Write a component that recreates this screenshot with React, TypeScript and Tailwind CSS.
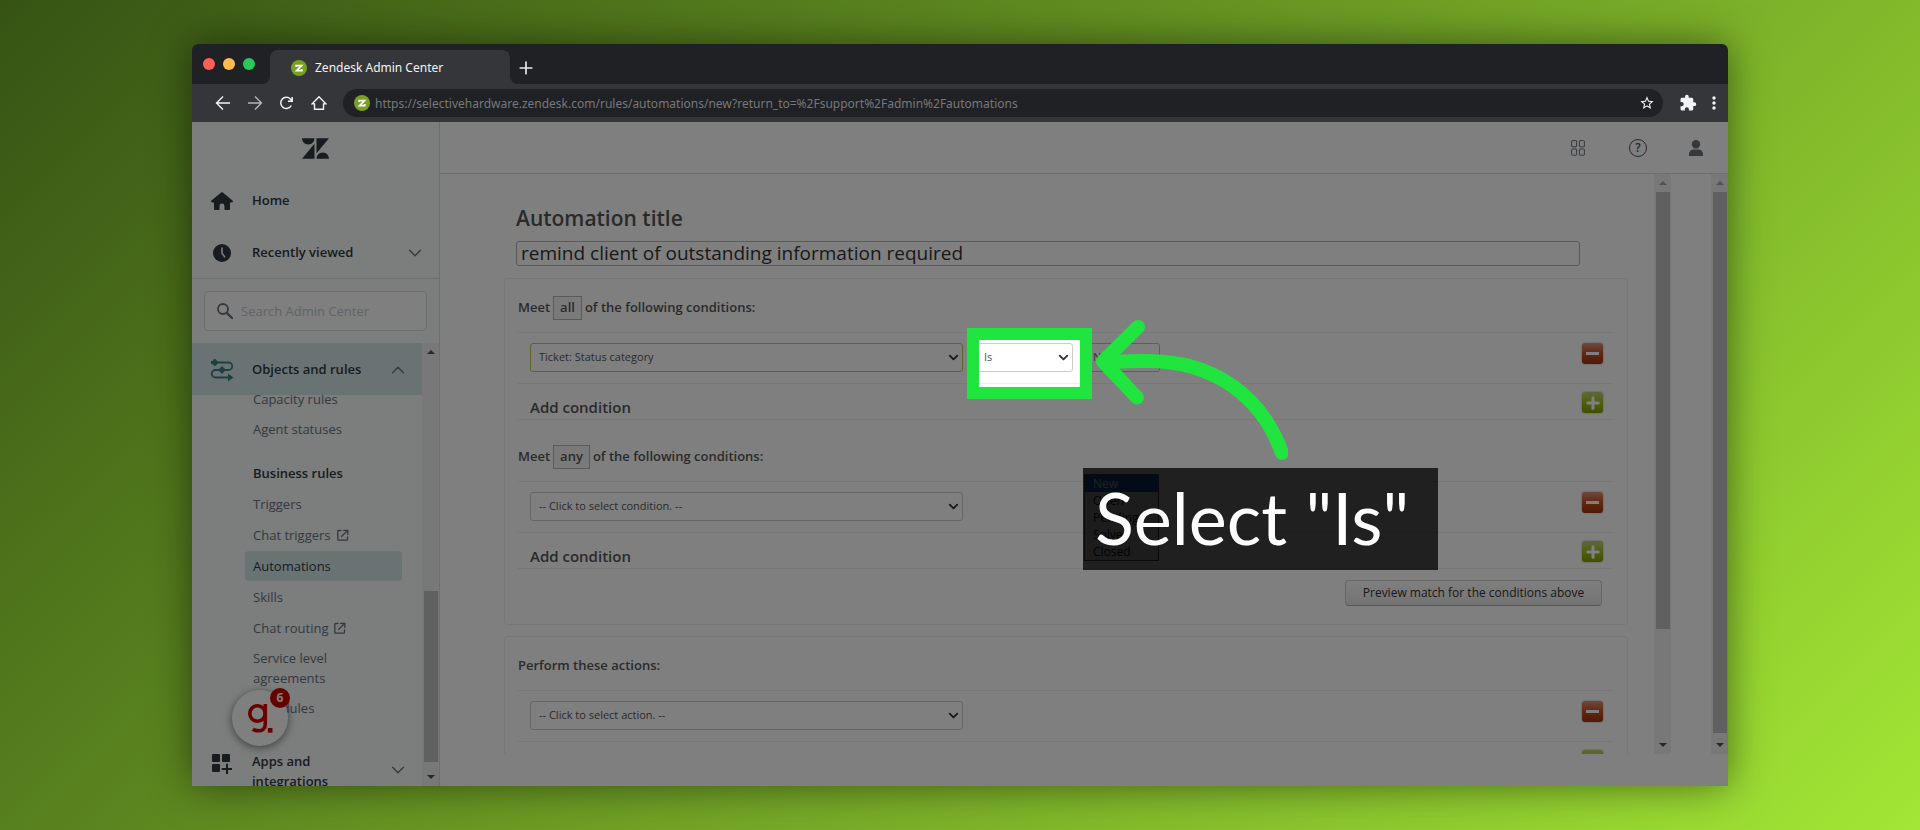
import type { ReactNode } from "react";
import { ChevronDown, ChevronUp, Plus } from "lucide-react";
import { MdExtension, MdMoreVert, MdOutlineStarBorder } from "react-icons/md";

type NavItem = {
  label: string;
  external?: boolean;
  active?: boolean;
};

const navItems: NavItem[] = [
  { label: "Triggers" },
  { label: "Chat triggers", external: true },
  { label: "Automations", active: true },
  { label: "Skills" },
  { label: "Chat routing", external: true },
  { label: "Service level agreements" },
  { label: "Schedules" },
];

const statusOptions = ["New", "Open", "Pending", "Solved", "Closed"];

function Favicon() {
  return (
    <svg viewBox="0 0 16 16" className="size-4 shrink-0" aria-hidden="true">
      <circle cx="8" cy="8" r="8" fill="#78a022" />
      <path d="M5.200 7V5.600h5.400l-5 5h5.200V9" fill="none" stroke="#fff" strokeWidth="1.7" />
    </svg>
  );
}

function ZendeskMark() {
  return (
    <svg viewBox="0 2.9 24 18.2" className="h-[21px] w-[27px]" fill="#2f3941" aria-hidden="true">
      <path d="M12.914 2.904V16.29L24 2.905H12.914zM0 2.906C0 5.966 2.483 8.45 5.543 8.45s5.542-2.484 5.543-5.544H0zm11.086 4.807L0 21.096h11.086V7.713zm7.37 7.84c-3.063 0-5.542 2.48-5.542 5.543H24c0-3.06-2.48-5.543-5.543-5.543z" />
    </svg>
  );
}

function HomeIcon() {
  return (
    <svg viewBox="0 0 22 18" className="h-[18px] w-[22px]" fill="#2f3941" aria-hidden="true">
      <path d="M10.2.4a1.3 1.3 0 0 1 1.6 0l9.7 8c.9.8.4 2.1-.8 2.1H19V17a1 1 0 0 1-1 1h-3.600a1 1 0 0 1-1-1v-3.200a2.400 2.400 0 0 0-4.800 0V17a1 1 0 0 1-1 1H4a1 1 0 0 1-1-1v-6.500H1.300c-1.200 0-1.700-1.300-.8-2.100z" />
    </svg>
  );
}

function ClockIcon() {
  return (
    <svg viewBox="0 0 18 18" className="size-[18px]" aria-hidden="true">
      <circle cx="9" cy="9" r="9" fill="#2f3941" />
      <path d="M9 4v5.200l2.600 3.600" fill="none" stroke="#f8f9f9" strokeWidth="1.6" strokeLinecap="round" />
    </svg>
  );
}

function RulesIcon() {
  return (
    <svg viewBox="0 0 24 24" className="size-6" aria-hidden="true">
      <path
        d="M5 4.500h13.500a3.750 3.750 0 0 1 0 7.500h-13a3.750 3.750 0 0 0 0 7.500H18"
        fill="none"
        stroke="#3d8086"
        strokeWidth="1.8"
      />
      <path d="M4.800.5l4 4-4 4-4-4zM12 8l4 4-4 4-4-4zM18 15.500l5.500 4-5.500 4z" fill="#3d8086" />
      <path d="M1 4.500h4" stroke="#3d8086" strokeWidth="3" />
    </svg>
  );
}

function AppsIcon() {
  return (
    <svg viewBox="0 0 20 20" className="size-5" fill="#2f3941" aria-hidden="true">
      <rect width="8" height="8" rx="1" />
      <rect x="10" width="8" height="8" rx="1" />
      <rect y="10" width="8" height="8" rx="1" />
      <path d="M15 10.500v9M10.500 15h9" stroke="#2f3941" strokeWidth="2" strokeLinecap="round" />
    </svg>
  );
}

function ExternalIcon() {
  return (
    <svg
      viewBox="0 0 12 12"
      className="size-3"
      fill="none"
      stroke="currentColor"
      strokeWidth="1.3"
      strokeLinecap="round"
      aria-hidden="true"
    >
      <path d="M4 1.500H1.500a.7.7 0 0 0-.7.7v8.300a.7.7 0 0 0 .7.7h8.300a.7.7 0 0 0 .7-.7V8" />
      <path d="M4.500 7.500l6-6M6.500 1.300h4.300v4.300" />
    </svg>
  );
}

function Scrollbar({ thumb, mutedUp }: { thumb: string; mutedUp?: boolean }) {
  return (
    <div className="flex w-[17px] shrink-0 flex-col items-center bg-[#f1f1f1]" aria-hidden="true">
      <div className="flex h-[18px] items-center">
        <svg viewBox="0 0 8 4" className="h-1 w-2" fill={mutedUp ? "#a3a3a3" : "#505050"}>
          <path d="M0 4l4-4 4 4z" />
        </svg>
      </div>
      <div className={`w-[14px] bg-[#c1c1c1] ${thumb}`} />
      <div className="flex h-[18px] items-center">
        <svg viewBox="0 0 8 4" className="h-1 w-2" fill="#505050">
          <path d="M0 0l4 4 4-4z" />
        </svg>
      </div>
    </div>
  );
}

function SelectBox({
  label,
  options,
  className,
}: {
  label: string;
  options: string[];
  className: string;
}) {
  return (
    <div className="relative">
      <select
        aria-label={label}
        className={`h-[29px] appearance-none rounded-[3px] border bg-white text-[11px] text-[#555] ${className}`}
      >
        {options.map((option) => (
          <option key={option}>{option}</option>
        ))}
      </select>
      <ChevronDown
        className="pointer-events-none absolute top-[7px] right-[2px] size-[15px] text-[#333]"
        strokeWidth={3}
      />
    </div>
  );
}

function RemoveButton() {
  return (
    <button
      aria-label="Remove"
      className="flex size-[21px] items-center justify-center rounded-[3px] bg-linear-to-b from-[#d9917a] via-[#c44f22] to-[#9c3410] shadow-[0_0_2px_rgba(0,0,0,0.4)]"
    >
      <span className="h-[3px] w-[13px] bg-white" />
    </button>
  );
}

function AddButton() {
  return (
    <button
      aria-label="Add"
      className="flex size-[21px] items-center justify-center rounded-[3px] bg-linear-to-b from-[#bccf70] via-[#9cc01c] to-[#7f9f00] shadow-[0_0_2px_rgba(0,0,0,0.4)]"
    >
      <Plus className="size-[18px] text-white" strokeWidth={4} />
    </button>
  );
}

function RuleGroup({ heading, addLabel, children }: { heading: ReactNode; addLabel: string; children: ReactNode }) {
  return (
    <div className="text-[#555]">
      <h3 className="flex h-[53px] items-center pt-[5px] text-[13px] font-semibold">{heading}</h3>
      <div className="flex h-[51px] items-start justify-between border-t border-[#eee] pt-[10px] pr-[10px] pl-3">
        <div className="flex gap-[7px]">{children}</div>
        <RemoveButton />
      </div>
      <div className="flex h-[37px] items-start justify-between border-y border-[#eee] pt-2 pr-[10px] pl-3">
        <span className="pt-[3px] text-[15px] leading-6 font-semibold">{addLabel}</span>
        <AddButton />
      </div>
    </div>
  );
}

function MatchToggle({ value }: { value: string }) {
  return (
    <button className="mx-[3px] h-6 border border-[#b5b5b5] bg-[#f4f4f4] px-1.5 font-semibold">
      {value}
    </button>
  );
}

function TitleBar() {
  return (
    <div className="flex h-10 shrink-0 items-end bg-[#202124]">
      <div className="flex h-10 items-center gap-2 pl-[11px]">
        <span className="size-3 rounded-full bg-[#ff5f57]" />
        <span className="size-3 rounded-full bg-[#febc4f]" />
        <span className="size-3 rounded-full bg-[#28c95a]" />
      </div>
      <div className="ml-[7px] size-2 bg-[#35363a]">
        <div className="size-2 rounded-br-lg bg-[#202124]" />
      </div>
      <div className="flex h-[34px] w-60 items-center gap-2 rounded-t-lg bg-[#35363a] pt-px pl-[21px] text-[12px] text-[#f1f3f4]">
        <Favicon />
        Zendesk Admin Center
      </div>
      <div className="size-2 bg-[#35363a]">
        <div className="size-2 rounded-bl-lg bg-[#202124]" />
      </div>
      <button aria-label="New tab" className="-ml-0.5 flex h-8 items-center">
        <Plus className="size-5 text-[#e8eaed]" strokeWidth={2} />
      </button>
    </div>
  );
}

function Toolbar() {
  return (
    <div className="flex h-[38px] shrink-0 items-center bg-[#35363a] pr-1">
      <div className="flex items-center gap-4 pl-[23px] text-[#f1f3f4]">
        <button aria-label="Back">
          <svg viewBox="0 0 16 16" className="size-4" fill="none" stroke="currentColor" strokeWidth="1.4">
            <path d="M15 8H2M8 1.500L1.500 8 8 14.500" />
          </svg>
        </button>
        <button aria-label="Forward" className="text-[#b4b5b8]">
          <svg viewBox="0 0 16 16" className="size-4" fill="none" stroke="currentColor" strokeWidth="1.4">
            <path d="M1 8H14M8 1.500L14.500 8 8 14.500" />
          </svg>
        </button>
        <button aria-label="Reload">
          <svg viewBox="0 0 16 16" className="size-4" fill="none" stroke="currentColor" strokeWidth="1.5">
            <path d="M12.300 10.500A5.600 5.600 0 1 1 11.400 4L13 5.800M13.200 2v4.300H8.900" />
          </svg>
        </button>
        <button aria-label="Home">
          <svg viewBox="0 0 16 16" className="size-4" fill="none" stroke="currentColor" strokeWidth="1.4">
            <path d="M3.500 8.500v5.800h9V8.500M3.500 8.700H1.200L8 1.800l6.800 6.900H12.500" />
          </svg>
        </button>
      </div>
      <div className="ml-4 flex h-7 flex-1 items-center rounded-full bg-[#202124] pr-2 pl-[11px]">
        <Favicon />
        <input
          aria-label="Address"
          readOnly
          value="https://selectivehardware.zendesk.com/rules/automations/new?return_to=%2Fsupport%2Fadmin%2Fautomations"
          className="min-w-0 flex-1 bg-transparent pt-0.5 pl-[5px] text-[12px] text-[#77787b] outline-none"
        />
        <button aria-label="Bookmark">
          <MdOutlineStarBorder className="size-4 text-[#f1f3f4]" />
        </button>
      </div>
      <button aria-label="Extensions" className="ml-4">
        <MdExtension className="size-[18px] text-[#f1f3f4]" />
      </button>
      <button aria-label="Menu" className="ml-[7px]">
        <MdMoreVert className="size-5 text-[#f1f3f4]" />
      </button>
    </div>
  );
}

function Sidebar() {
  return (
    <aside className="flex w-[248px] shrink-0 flex-col border-r border-[#d8dcde] bg-[#f8fafa] text-[13px] text-[#2f3941]">
      <div className="flex h-[52px] shrink-0 items-center justify-center">
        <ZendeskMark />
      </div>
      <a href="#home" className="flex h-[52px] shrink-0 items-center pt-0.5 font-semibold">
        <span className="flex w-[60px] justify-center">
          <HomeIcon />
        </span>
        Home
      </a>
      <button className="flex h-[53px] shrink-0 items-center border-b border-[#d8dcde] pt-0.5 pr-[13px] font-semibold">
        <span className="flex w-[60px] justify-center">
          <ClockIcon />
        </span>
        Recently viewed
        <ChevronDown className="ml-auto size-[22px] text-[#68737d]" strokeWidth={1.5} />
      </button>
      <div className="shrink-0 p-3">
        <label className="flex h-10 items-center gap-2 rounded border border-[#d8dcde] bg-white px-3">
          <svg viewBox="0 0 16 16" className="size-4" fill="none" stroke="#68737d" aria-hidden="true">
            <circle cx="6" cy="6" r="5" strokeWidth="1.8" />
            <path d="M9.800 9.800l5.200 5.200" strokeWidth="2.4" strokeLinecap="round" />
          </svg>
          <input
            type="text"
            aria-label="Search Admin Center"
            placeholder="Search Admin Center"
            className="min-w-0 flex-1 pt-0.5 outline-none placeholder:text-[#c2c8cc]"
          />
        </label>
      </div>

      <div className="flex min-h-0 flex-1">
        <nav className="flex min-w-0 flex-1 flex-col">
          <button className="flex h-[52px] shrink-0 items-center bg-[#d5e7e8] pt-0.5 pr-[13px] font-semibold">
            <span className="flex w-[60px] justify-center">
              <RulesIcon />
            </span>
            Objects and rules
            <ChevronUp className="ml-auto size-[22px] text-[#68737d]" strokeWidth={1.5} />
          </button>
          <div className="min-h-0 flex-1 overflow-hidden">
            <div className="-mt-[10px] ml-[53px] text-[#68737d]">
              <a href="#capacity" className="flex h-[30px] items-center px-2">
                Capacity rules
              </a>
              <a href="#agent" className="flex h-[30px] items-center px-2">
                Agent statuses
              </a>
              <h4 className="mt-[14px] flex h-[30px] items-center px-2 font-semibold text-[#2f3941]">
                Business rules
              </h4>
              <ul className="mr-5 flex flex-col gap-px">
                {navItems.map((item) => (
                  <li key={item.label}>
                    <a
                      href="#rules"
                      className={`flex min-h-[30px] items-center gap-1.5 rounded px-2 py-1 leading-5 ${
                        item.active ? "bg-[#d5e7e8] text-[#2f3941]" : ""
                      }`}
                    >
                      <span className="max-w-[120px]">{item.label}</span>
                      {item.external && <ExternalIcon />}
                    </a>
                  </li>
                ))}
              </ul>
            </div>
            <button className="mt-7 flex w-full items-start pr-[13px] text-left font-semibold">
              <span className="flex w-[60px] justify-center pt-[3px]">
                <AppsIcon />
              </span>
              <span className="w-24 leading-5">Apps and integrations</span>
              <ChevronDown className="mt-2 ml-auto size-[22px] text-[#68737d]" strokeWidth={1.5} />
            </button>
          </div>
        </nav>
        <Scrollbar thumb="mt-auto mb-[6px] h-[171px]" />
      </div>
    </aside>
  );
}

function AutomationForm() {
  return (
    <div className="min-w-0 flex-1 overflow-hidden pt-6 pr-[26px] pl-16">
      <div className="pr-12 pl-3">
        <label htmlFor="automation-title" className="block text-[21px] leading-10 font-semibold text-[#555]">
          Automation title
        </label>
        <input
          id="automation-title"
          type="text"
          defaultValue="remind client of outstanding information required"
          className="mt-[3px] block h-[25px] w-full rounded-[3px] border border-[#b5b5b5] px-1 text-[19px] text-[#333]"
        />
      </div>

      <section className="mt-3 rounded border border-[#eee] pr-[14px] pb-[18px] pl-[13px]">
        <RuleGroup
          addLabel="Add condition"
          heading={
            <>
              Meet <MatchToggle value="all" /> of the following conditions:
            </>
          }
        >
          <SelectBox
            label="Condition"
            options={["Ticket: Status category"]}
            className="w-[433px] border-[#b2cf4c] px-2"
          />
          <SelectBox label="Operator" options={["Is"]} className="w-[103px] border-[#ccc] px-[13px]" />
          <SelectBox label="Status" options={["New"]} className="w-20 border-[#b9c2a0] px-3" />
        </RuleGroup>
        <div className="mt-2">
          <RuleGroup
            addLabel="Add condition"
            heading={
              <>
                Meet <MatchToggle value="any" /> of the following conditions:
              </>
            }
          >
            <SelectBox
              label="Any condition"
              options={["-- Click to select condition. --"]}
              className="w-[433px] border-[#ccc] px-2"
            />
          </RuleGroup>
        </div>
        <div className="mt-[11px] flex justify-end pr-[11px]">
          <button className="h-[26px] w-[257px] rounded border border-[#ccc] border-b-[#aaa] bg-linear-to-b from-white to-[#e6e6e6] text-[12px] text-[#333]">
            Preview match for the conditions above
          </button>
        </div>
      </section>

      <section className="mt-[11px] rounded border border-[#eee] pr-[14px] pb-[18px] pl-[13px]">
        <RuleGroup addLabel="Add action" heading="Perform these actions:">
          <SelectBox
            label="Action"
            options={["-- Click to select action. --"]}
            className="w-[433px] border-[#ccc] px-2"
          />
        </RuleGroup>
      </section>
    </div>
  );
}

function MainPane() {
  return (
    <div className="flex min-w-0 flex-1 flex-col bg-white">
      <header className="flex h-[52px] shrink-0 items-center justify-end border-b border-[#d8dcde] pr-[25px]">
        <button aria-label="Products" className="mr-11">
          <svg viewBox="0 0 14 16" className="h-4 w-[14px]" fill="none" stroke="#68737d" aria-hidden="true">
            <rect x=".6" y=".6" width="5" height="6.200" rx=".6" />
            <rect x="8.400" y=".6" width="5" height="6.200" rx=".6" />
            <rect x=".6" y="9" width="5" height="6.200" rx=".6" />
            <rect x="8.400" y="9" width="5" height="6.200" rx=".6" />
          </svg>
        </button>
        <button
          aria-label="Help"
          className="mr-[42px] flex size-[18px] items-center justify-center rounded-full border border-[#49545c] text-[12px] font-semibold text-[#49545c]"
        >
          ?
        </button>
        <button aria-label="Profile">
          <svg viewBox="0 0 14 16" className="h-4 w-[14px]" fill="#68737d" aria-hidden="true">
            <circle cx="7" cy="4.200" r="4.200" />
            <path d="M0 16v-2a4.500 4.500 0 0 1 4.500-4.500h5A4.500 4.500 0 0 1 14 14v2z" />
          </svg>
        </button>
      </header>
      <div className="mb-8 flex min-h-0 flex-1">
        <AutomationForm />
        <Scrollbar thumb="mb-auto h-[437px]" mutedUp />
        <div className="w-10 shrink-0" />
        <Scrollbar thumb="mb-[3px] flex-1" mutedUp />
      </div>
    </div>
  );
}

function ChatBadge() {
  return (
    <button
      aria-label="Open guide, 6 new items"
      className="absolute bottom-10 left-10 flex size-14 items-center justify-center rounded-full bg-white shadow-[0_2px_8px_rgba(0,0,0,0.5)]"
    >
      <svg viewBox="0 0 26 30" className="h-[30px] w-[26px]" fill="none" stroke="#d40000" strokeWidth="3.6" aria-hidden="true">
        <circle cx="10.500" cy="10.500" r="7.700" />
        <path d="M18.300 1v20c0 4.500-3 6.800-6.800 6.800-2.800 0-4.700-.8-5.700-1.600" />
        <rect x="20.800" y="25" width="4.700" height="4.700" fill="#d40000" stroke="none" />
      </svg>
      <span className="absolute -top-0.5 -right-0.5 flex size-5 items-center justify-center rounded-full bg-[#cc0000] text-[12px] font-bold text-white">
        6
      </span>
    </button>
  );
}

function Walkthrough() {
  return (
    <>
      <ul className="absolute top-[352px] left-[892px] w-[75px] border border-[#555] bg-[#e0e0e0] text-[12px] leading-[17px] text-[#111]">
        {statusOptions.map((option, index) => (
          <li key={option} className={index === 0 ? "bg-[#1065c0] px-2 text-white" : "px-2"}>
            {option}
          </li>
        ))}
      </ul>
      {/* the huge spread dims everything outside the frame */}
      <div className="pointer-events-none absolute top-[206px] left-[775px] h-[71px] w-[125px] border-[12px] border-[#1fe53e] shadow-[0_0_0_3000px_rgba(0,0,0,0.5)]" />
      <div className="absolute top-[346px] left-[891px] flex h-[102px] w-[355px] items-center bg-black/75 pb-1 pl-3 font-[Lato,sans-serif] text-[72px] leading-none whitespace-nowrap text-white">
        Select "Is"
      </div>
      <svg
        viewBox="0 0 200 145"
        className="pointer-events-none absolute top-[196px] left-[896px] h-[145px] w-[200px]"
        fill="none"
        stroke="#1fe53e"
        strokeWidth="14"
        strokeLinecap="round"
        strokeLinejoin="round"
        aria-hidden="true"
      >
        <path d="M50 9L15 43.500l34 36" />
        <path d="M17 44.500c22-2 34-1.500 42-1.500 68 0 115 36 135 92" />
      </svg>
    </>
  );
}

export default function App() {
  return (
    <div className="h-screen overflow-hidden bg-linear-[135deg] from-[#365314] to-[#a3e635] py-11 font-['Noto_Sans',sans-serif]">
      <div className="mx-auto flex h-full w-4/5 flex-col overflow-hidden rounded-t-md shadow-[0_0_40px_rgba(0,0,0,0.5)]">
        <TitleBar />
        <Toolbar />
        <div className="relative flex min-h-0 flex-1 overflow-hidden font-['Open_Sans',sans-serif]">
          <Sidebar />
          <MainPane />
          <ChatBadge />
          <Walkthrough />
        </div>
      </div>
    </div>
  );
}
